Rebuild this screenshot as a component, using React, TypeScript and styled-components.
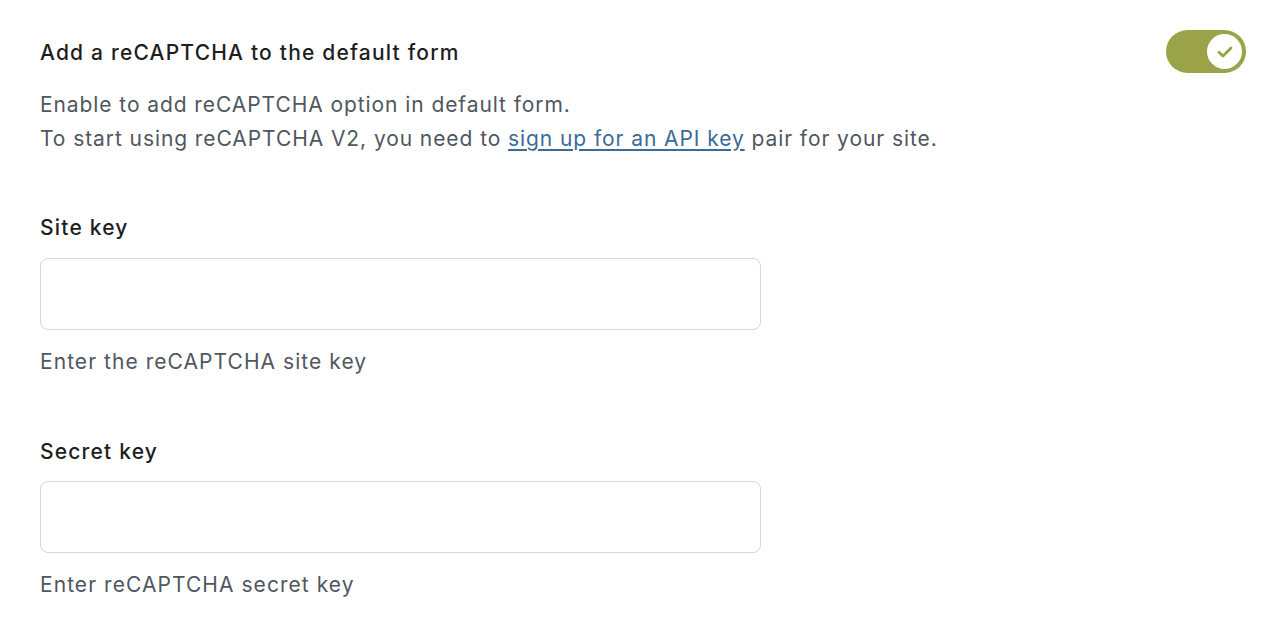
import React from "react";
import styled, { createGlobalStyle } from "styled-components";

const Global = createGlobalStyle`
  html, body { margin: 0; padding: 0; background: #ffffff; }
  body { font-family: Inter, "Noto Sans", sans-serif; -webkit-font-smoothing: antialiased; }
`;

const Page = styled.div`
  padding: 28px 36px 0 40px;
  width: 1282px;
  box-sizing: border-box;
`;

const Header = styled.div`
  display: flex;
  justify-content: space-between;
  align-items: flex-start;
`;

const Title = styled.h2`
  margin: 11px 0 0;
  font-size: 21px;
  font-weight: 500;
  line-height: 28px;
  letter-spacing: 1.2px;
  color: #1e1e1e;
`;

const Desc = styled.p`
  margin: 15px 0 0;
  font-size: 21px;
  line-height: 34px;
  letter-spacing: 0.92px;
  color: #50575e;
`;

const Link = styled.a`
  color: #3a6b99;
  text-decoration: underline;
  text-underline-offset: 3px;
`;

const Toggle = styled.button`
  width: 80px;
  height: 43px;
  border: none;
  border-radius: 22px;
  background: #9aa348;
  padding: 0 4px;
  display: flex;
  align-items: center;
  justify-content: flex-end;
  cursor: pointer;
  margin-top: 2px;
`;

const Knob = styled.span`
  width: 35px;
  height: 35px;
  border-radius: 50%;
  background: #ffffff;
  display: flex;
  align-items: center;
  justify-content: center;
`;

const Field = styled.div<{ $top: number; $gap: number }>`
  display: flex;
  flex-direction: column;
  margin-top: ${(p) => p.$top}px;
  --input-gap: ${(p) => p.$gap}px;
`;

const Label = styled.label`
  font-size: 21px;
  font-weight: 500;
  line-height: 28px;
  letter-spacing: 1.2px;
  color: #1e1e1e;
`;

const Input = styled.input`
  margin-top: var(--input-gap);
  width: 721px;
  height: 72px;
  box-sizing: border-box;
  border: 1px solid #d6d6d6;
  border-radius: 8px;
  background: #fff;
  font-family: inherit;
  font-size: 20px;
  padding: 0 16px;
  outline: none;
`;

const Help = styled.p`
  margin: 18px 0 0;
  font-size: 21px;
  line-height: 28px;
  letter-spacing: 1.05px;
  color: #50575e;
`;

export default function App() {
  return (
    <>
      <Global />
      <Page>
        <Header>
          <Title>Add a reCAPTCHA to the default form</Title>
          <Toggle aria-label="Enabled">
            <Knob>
              <svg width="16" height="12" viewBox="0 0 16 12" fill="none">
                <path d="M2 6.2 L6 10 L14 2" stroke="#9aa348" strokeWidth="2.8" strokeLinecap="round" strokeLinejoin="round" />
              </svg>
            </Knob>
          </Toggle>
        </Header>
        <Desc>
          Enable to add reCAPTCHA option in default form.
          <br />
          To start using reCAPTCHA V2, you need to <Link href="#">sign up for an API key</Link> pair for your site.
        </Desc>
        <Field $top={58} $gap={16}>
          <Label>Site key</Label>
          <Input type="text" />
          <Help>Enter the reCAPTCHA site key</Help>
        </Field>
        <Field $top={62} $gap={15}>
          <Label>Secret key</Label>
          <Input type="text" />
          <Help>Enter reCAPTCHA secret key</Help>
        </Field>
      </Page>
    </>
  );
}
